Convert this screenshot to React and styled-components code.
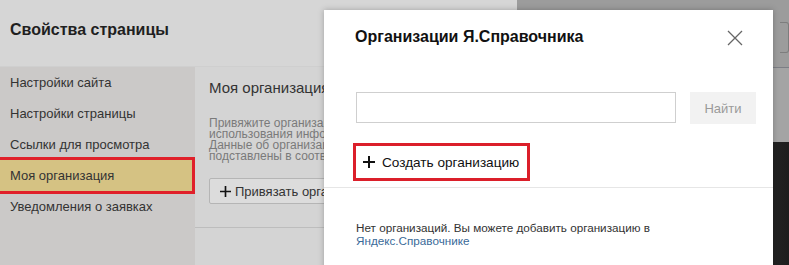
import styled, { createGlobalStyle } from 'styled-components';

const GlobalStyle = createGlobalStyle`
  html, body {
    margin: 0;
    padding: 0;
    overflow: hidden;
  }
  body {
    font-family: "Liberation Sans", Arial, sans-serif;
    color: #333;
  }
`;

const Screen = styled.div`
  position: relative;
  width: 789px;
  height: 265px;
  display: flex;
  overflow: hidden;
`;

const PagePanel = styled.div`
  width: 517px;
  display: flex;
  flex-direction: column;
  background-color: #d6d6d6;
`;

const PanelHeader = styled.div`
  height: 67px;
  padding-left: 10px;
  display: flex;
  align-items: center;
  padding-bottom: 6px;
  box-sizing: border-box;
  font-size: 16px;
  font-weight: bold;
  color: #1f1f1f;
  border-bottom: 1px solid #cfcfcf;
`;

const PanelBody = styled.div`
  flex: 1;
  display: flex;
`;

const Sidebar = styled.ul`
  list-style: none;
  margin: 0;
  padding: 0;
  width: 195px;
  background-color: #cbc9c8;
`;

const SidebarItem = styled.li`
  height: 31px;
  margin-right: 3px;
  padding-left: 10px;
  display: flex;
  align-items: center;
  font-size: 13px;
  color: #333;
  background-color: ${(p) => (p.$active ? '#d5c283' : 'transparent')};
  outline: ${(p) => (p.$active ? '3px solid #e0202a' : 'none')};
`;

const Content = styled.div`
  flex: 1;
  display: flex;
  flex-direction: column;
  background-color: #d4d4d4;
`;

const ContentInner = styled.div`
  width: 129px;
  height: 161px;
  padding: 12px 0 0 14px;
  box-sizing: border-box;
  overflow: hidden;
  border-bottom: 1px solid #bdbdbd;
`;

const ContentTitle = styled.div`
  font-size: 15px;
  color: #333;
  white-space: nowrap;
`;

const ContentText = styled.p`
  margin: 22px 0 0;
  font-size: 12px;
  line-height: 11px;
  color: #7a7a7a;
  white-space: nowrap;
`;

const LinkButton = styled.div`
  margin-top: 16px;
  height: 24px;
  padding: 0 10px;
  display: inline-flex;
  align-items: center;
  gap: 4px;
  font-size: 13px;
  color: #333;
  background-color: #dcdcdc;
  border: 1px solid #b5b5b5;
  border-radius: 2px;
  white-space: nowrap;
`;

const RightArea = styled.div`
  flex: 1;
  display: flex;
  flex-direction: column;
`;

const RightTop = styled.div`
  height: 68px;
  background-color: #9c9c9c;
  border-bottom: 1px solid #7c7e85;
  box-sizing: border-box;
  display: flex;
  justify-content: flex-end;
  align-items: center;
`;

const RightField = styled.div`
  width: 8px;
  height: 29px;
  margin-top: 8px;
  border: 1px solid #7d7d7d;
  border-left: none;
  border-radius: 0 3px 3px 0;
`;

const RightMiddle = styled.div`
  height: 74px;
  background-color: #a4a4a4;
`;

const RightBottom = styled.div`
  flex: 1;
  background: linear-gradient(90deg, #505050, #3e3e3e 60%, #1e1e1e);
`;

const Modal = styled.div`
  position: absolute;
  left: 324px;
  top: 10px;
  width: 449px;
  height: 280px;
  background-color: #fff;
  box-shadow: 0 0 6px rgba(0, 0, 0, 0.25);
  display: flex;
  flex-direction: column;
`;

const ModalHeader = styled.div`
  height: 54px;
  padding: 0 30px 0 31px;
  display: flex;
  align-items: center;
  justify-content: space-between;
`;

const ModalTitle = styled.h2`
  margin: 0;
  font-size: 16px;
  font-weight: bold;
  color: #111;
`;

const CloseButton = styled.button`
  width: 16px;
  height: 16px;
  padding: 0;
  border: none;
  background: none;
  display: flex;
  margin-top: 1px;
`;

const SearchRow = styled.div`
  margin-top: 28px;
  padding: 0 17px 0 32px;
  display: flex;
  gap: 14px;
`;

const SearchInput = styled.input`
  width: 320px;
  height: 31px;
  box-sizing: border-box;
  border: 1px solid #cfcfcf;
  outline: none;
`;

const SearchButton = styled.button`
  width: 66px;
  height: 32px;
  border: none;
  background-color: #f2f2f2;
  font-family: inherit;
  font-size: 13px;
  color: #9a9a9a;
`;

const CreateButton = styled.button`
  align-self: flex-start;
  margin: 22px 0 0 32px;
  width: 171px;
  height: 32px;
  padding: 0 0 0 7px;
  border: none;
  outline: 3px solid #db1f2a;
  background-color: #fff;
  display: flex;
  align-items: center;
  gap: 7px;
  font-family: inherit;
  font-size: 13.6px;
  color: #111;
  white-space: nowrap;
`;

const Divider = styled.div`
  margin-top: 9px;
  height: 1px;
  background-color: #e6e6e6;
`;

const Note = styled.p`
  margin: 33px 0 0 32px;
  font-size: 11.7px;
  line-height: 13px;
  color: #333;
`;

const NoteLink = styled.a`
  color: #3a6a99;
  text-decoration: none;
`;

function PlusIcon({ size, stroke }) {
  return (
    <svg width={size} height={size} viewBox="0 0 12 12">
      <path d="M6 0V12M0 6H12" stroke="#111" strokeWidth={stroke} />
    </svg>
  );
}

const menu = [
  'Настройки сайта',
  'Настройки страницы',
  'Ссылки для просмотра',
  'Моя организация',
  'Уведомления о заявках',
];

export default function App() {
  return (
    <>
      <GlobalStyle />
      <Screen>
        <PagePanel>
          <PanelHeader>Свойства страницы</PanelHeader>
          <PanelBody>
            <Sidebar>
              {menu.map((item) => (
                <SidebarItem key={item} $active={item === 'Моя организация'}>
                  {item}
                </SidebarItem>
              ))}
            </Sidebar>
            <Content>
              <ContentInner>
                <ContentTitle>Моя организация</ContentTitle>
                <ContentText>
                  Привяжите организацию из Справочника для
                  <br />
                  использования информации на странице.
                  <br />
                  Данные об организации будут автоматически
                  <br />
                  подставлены в соответствующие блоки.
                </ContentText>
                <LinkButton>
                  <PlusIcon size={11} stroke={1.8} />
                  Привязать организацию
                </LinkButton>
              </ContentInner>
            </Content>
          </PanelBody>
        </PagePanel>
        <RightArea>
          <RightTop>
            <RightField />
          </RightTop>
          <RightMiddle />
          <RightBottom />
        </RightArea>

        <Modal>
          <ModalHeader>
            <ModalTitle>Организации Я.Справочника</ModalTitle>
            <CloseButton aria-label="Закрыть">
              <svg width="16" height="16" viewBox="0 0 16 16">
                <path d="M1 1L15 15M15 1L1 15" stroke="#666" strokeWidth="1.3" />
              </svg>
            </CloseButton>
          </ModalHeader>
          <SearchRow>
            <SearchInput />
            <SearchButton>Найти</SearchButton>
          </SearchRow>
          <CreateButton>
            <PlusIcon size={12} stroke={2} />
            Создать организацию
          </CreateButton>
          <Divider />
          <Note>
            Нет организаций. Вы можете добавить организацию в
            <br />
            <NoteLink href="#">Яндекс.Справочнике</NoteLink>
          </Note>
        </Modal>
      </Screen>
    </>
  );
}
